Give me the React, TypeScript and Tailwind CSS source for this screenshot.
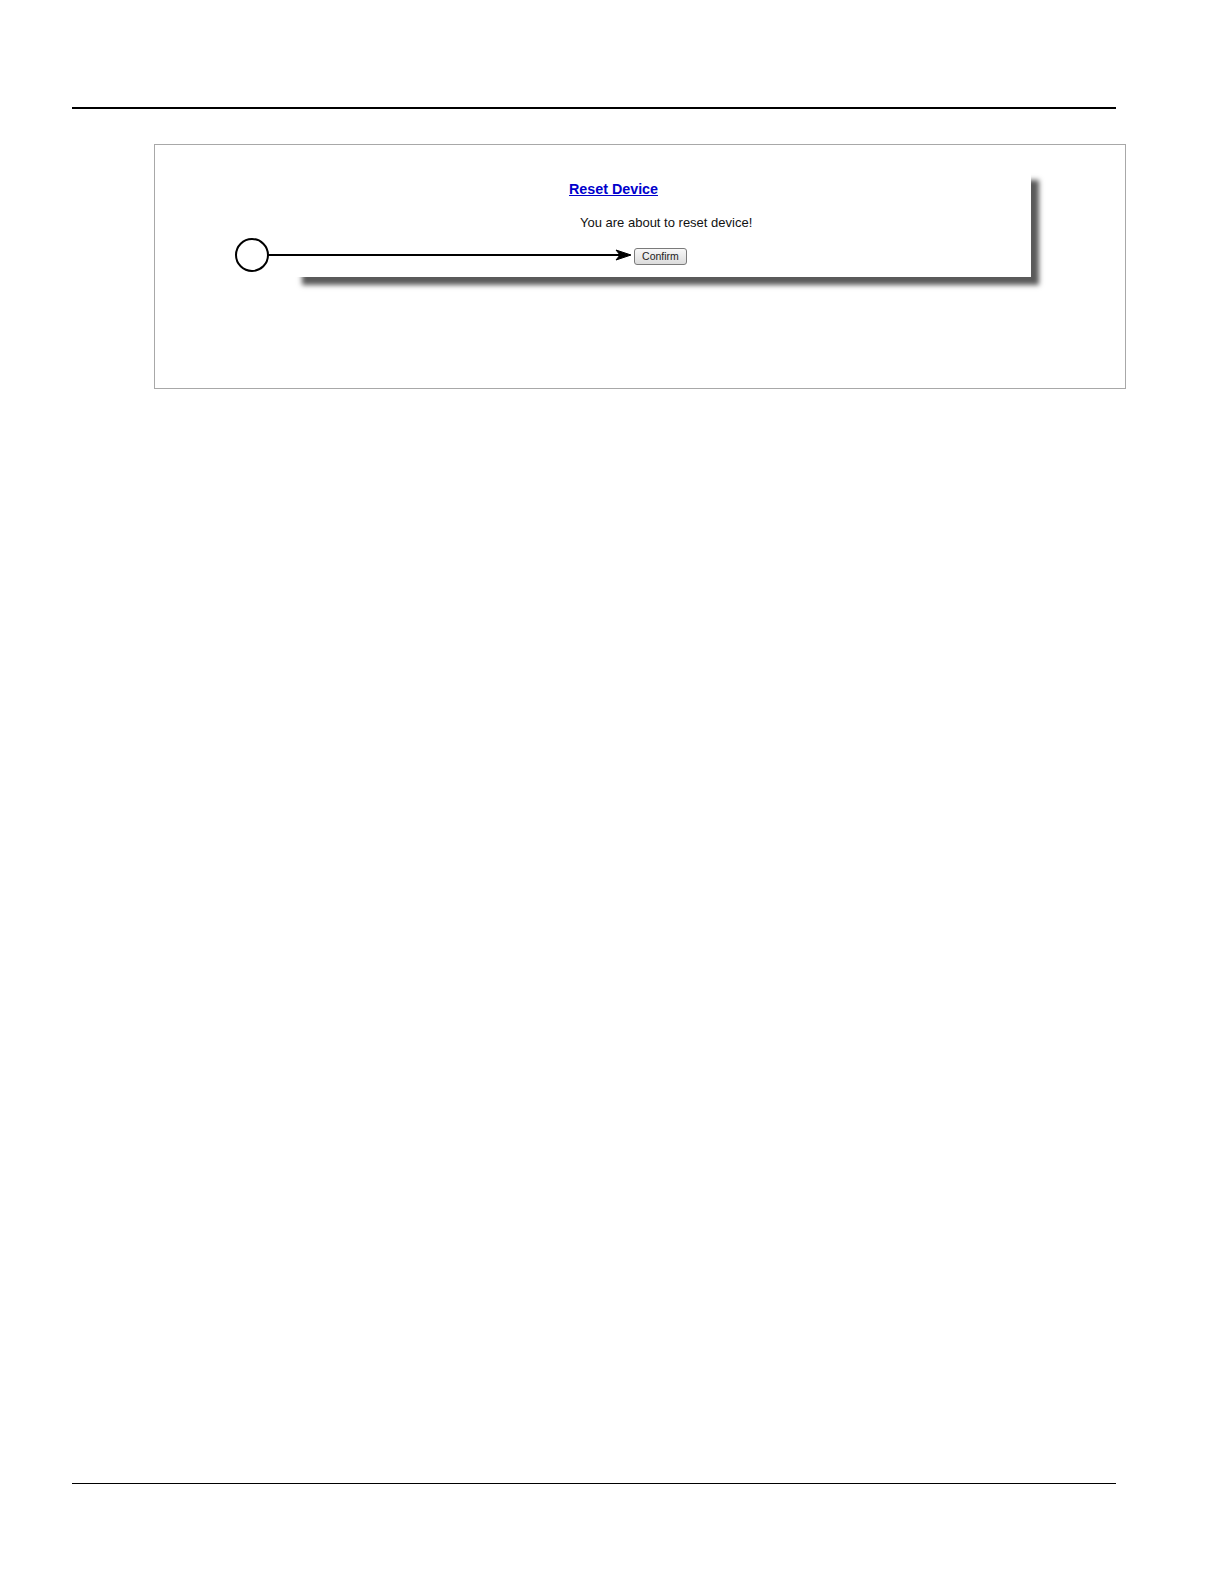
import React from "react";

export default function App() {
  return (
    <div className="w-[1224px] h-[1584px] bg-white relative font-['Liberation_Sans',Arial,sans-serif] flex flex-col">
      <div className="mt-[107px] ml-[72px] w-[1044px] h-[1.5px] bg-black" />
      <div className="mt-[35.5px] ml-[154px] w-[972px] h-[245px] border border-[#a8a8a8] relative">
        <div className="ml-[139px] mt-[27px] w-[737px] h-[105px] bg-white shadow-[8px_8px_5px_#5a5a5a] flex flex-col items-start">
          <a
            href="#"
            className="ml-[275px] mt-[9px] text-[14.3px] leading-[16px] font-bold text-[#0000cc] underline"
          >
            Reset Device
          </a>
          <p className="ml-[286px] mt-[18px] text-[13px] leading-[15px] text-[#111]">
            You are about to reset device!
          </p>
          <button className="ml-[340px] mt-[18px] w-[53px] h-[17px] border border-[#7a7a7a] rounded-[3px] bg-gradient-to-b from-[#f8f8f8] to-[#dcdcdc] text-[10.5px] leading-[15px] text-[#222] flex items-center justify-center">
            Confirm
          </button>
        </div>
        <svg
          className="absolute left-0 top-0 pointer-events-none"
          width="972"
          height="245"
          viewBox="0 0 972 245"
        >
          <circle cx="97" cy="110" r="16" fill="white" stroke="black" strokeWidth="2" />
          <line x1="113" y1="110" x2="468" y2="110" stroke="black" strokeWidth="2" />
          <path d="M476 110 L461 105 L465 110 L461 115 Z" fill="black" stroke="black" strokeWidth="1" />
        </svg>
      </div>
      <div className="mt-auto mb-[100px] ml-[72px] w-[1044px] h-[1.5px] bg-black" />
    </div>
  );
}
